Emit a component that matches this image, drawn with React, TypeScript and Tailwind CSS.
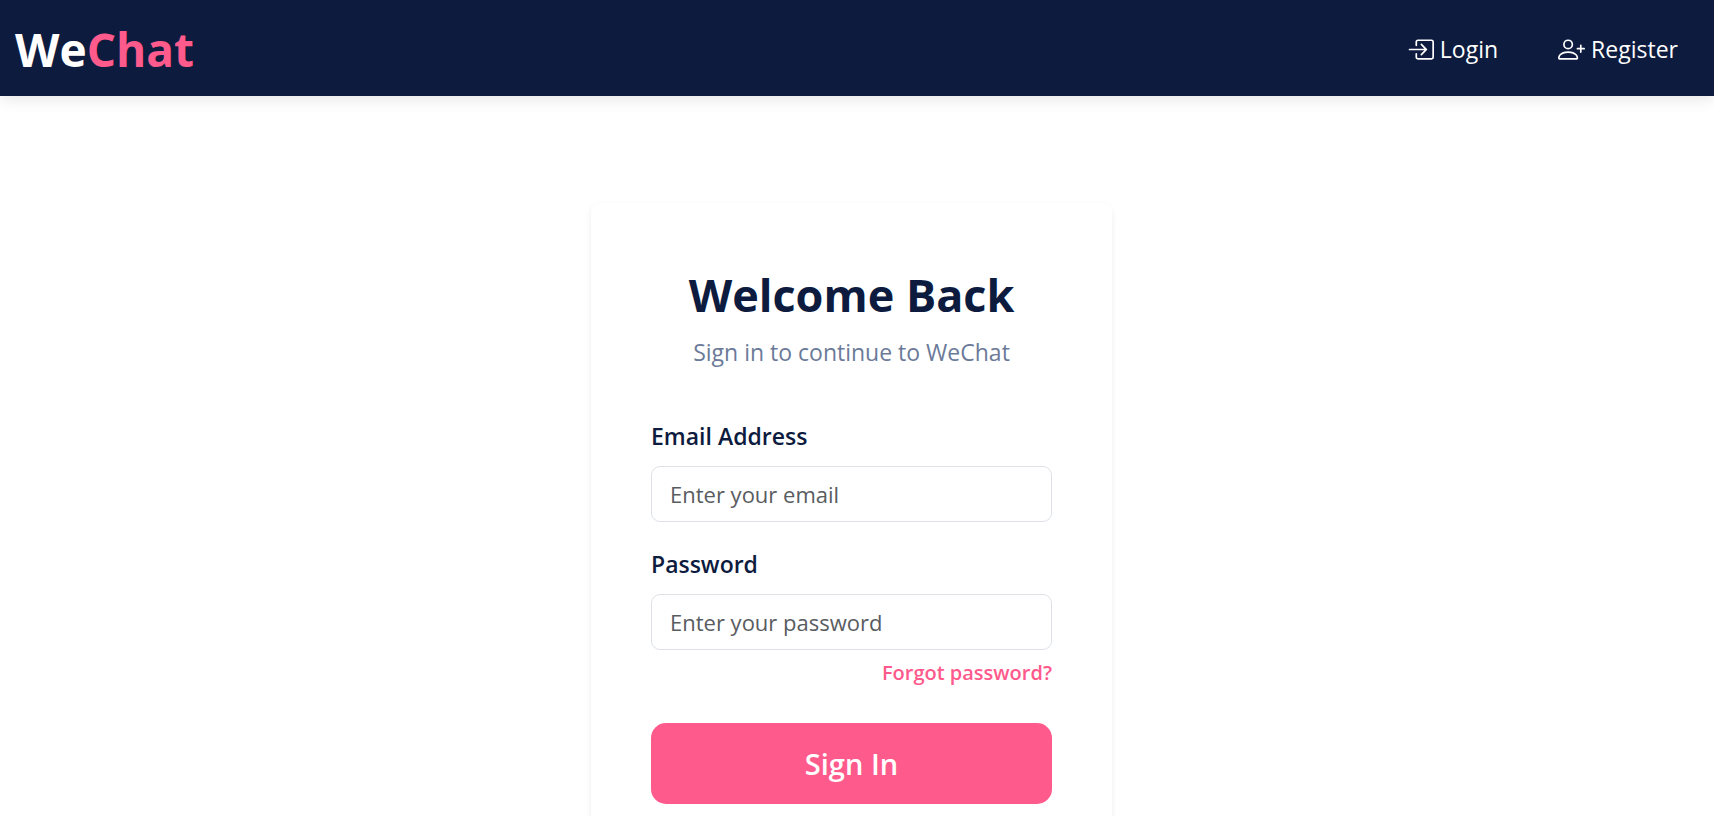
import { useState } from "react";
import type { FormEvent, InputHTMLAttributes } from "react";
import { BsBoxArrowInRight, BsPersonPlus } from "react-icons/bs";

interface FieldProps extends InputHTMLAttributes<HTMLInputElement> {
  id: string;
  label: string;
}

function Field({ id, label, ...props }: FieldProps) {
  return (
    <div>
      <label
        htmlFor={id}
        className="block mb-3 text-[23px] leading-9 font-semibold text-[#0d1b3e]"
      >
        {label}
      </label>
      <input
        id={id}
        className="block w-full h-14 px-[18px] rounded-[9px] border border-[#dee2e6] bg-white text-[22px] text-[#0d1b3e] placeholder:text-[#595c5f] outline-none focus:border-[#ff5a8c]"
        {...props}
      />
    </div>
  );
}

function Navbar() {
  return (
    <header className="relative flex items-center justify-between h-24 pt-0.5 pl-[15px] pr-9 bg-[#0d1b3e] shadow-[0_3px_15px_rgba(0,0,0,0.1)]">
      <a href="#" className="text-[46px] leading-none font-bold text-white">
        We<span className="text-[#ff5a8c]">Chat</span>
      </a>
      <nav className="flex items-center gap-[60px] text-[23px] text-white">
        <a href="#login" className="flex items-center gap-1.5">
          <BsBoxArrowInRight className="w-[27px] h-[27px]" />
          Login
        </a>
        <a href="#register" className="flex items-center gap-1.5">
          <BsPersonPlus className="w-[27px] h-[27px]" />
          Register
        </a>
      </nav>
    </header>
  );
}

export default function App() {
  const [email, setEmail] = useState("");
  const [password, setPassword] = useState("");

  const handleSubmit = (e: FormEvent) => {
    e.preventDefault();
  };

  return (
    <div className="min-h-screen bg-white font-['Open_Sans','Noto_Sans',sans-serif]">
      <Navbar />
      <main className="flex justify-center pt-[107px] pr-[11px]">
        <div className="w-full max-w-[521px] p-[60px] rounded-[9px] bg-white shadow-[0_3px_6px_rgba(0,0,0,0.075)]">
          <div className="mb-12 text-center">
            <h1 className="mb-2 text-[45px] leading-[63px] font-bold text-[#0d1b3e]">
              Welcome Back
            </h1>
            <p className="text-[23px] leading-9 text-[#6b7a99]">
              Sign in to continue to WeChat
            </p>
          </div>
          <form onSubmit={handleSubmit}>
            <div className="flex flex-col gap-6">
              <Field
                id="email"
                label="Email Address"
                type="email"
                placeholder="Enter your email"
                value={email}
                onChange={(e) => setEmail(e.target.value)}
              />
              <Field
                id="password"
                label="Password"
                type="password"
                placeholder="Enter your password"
                value={password}
                onChange={(e) => setPassword(e.target.value)}
              />
            </div>
            <div className="flex justify-end mt-2 mb-[35px]">
              <a
                href="#forgot"
                className="text-xl leading-[30px] font-semibold text-[#ff5a8c]"
              >
                Forgot password?
              </a>
            </div>
            <button
              type="submit"
              className="block w-full h-[81px] rounded-[15px] bg-[#ff5a8c] text-[29px] font-semibold text-white"
            >
              Sign In
            </button>
          </form>
        </div>
      </main>
    </div>
  );
}
